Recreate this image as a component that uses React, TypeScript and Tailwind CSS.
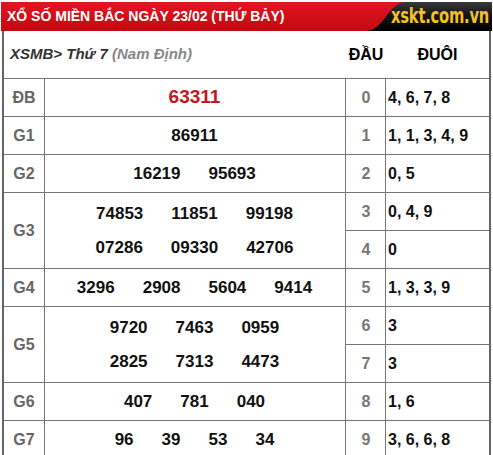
import React from "react";

const font = { fontFamily: '"Liberation Sans", Arial, sans-serif' };

type Row = { label: string; lines: string[][]; red?: boolean; tall?: boolean };

const rows: Row[] = [
  { label: "ĐB", lines: [["63311"]], red: true },
  { label: "G1", lines: [["86911"]] },
  { label: "G2", lines: [["16219", "95693"]] },
  { label: "G3", lines: [["74853", "11851", "99198"], ["07286", "09330", "42706"]], tall: true },
  { label: "G4", lines: [["3296", "2908", "5604", "9414"]] },
  { label: "G5", lines: [["9720", "7463", "0959"], ["2825", "7313", "4473"]], tall: true },
  { label: "G6", lines: [["407", "781", "040"]] },
  { label: "G7", lines: [["96", "39", "53", "34"]] },
];

const loto: [string, string][] = [
  ["0", "4, 6, 7, 8"],
  ["1", "1, 1, 3, 4, 9"],
  ["2", "0, 5"],
  ["3", "0, 4, 9"],
  ["4", "0"],
  ["5", "1, 3, 3, 9"],
  ["6", "3"],
  ["7", "3"],
  ["8", "1, 6"],
  ["9", "3, 6, 6, 8"],
];

function Logo() {
  return (
    <div className="relative h-full w-[126px] shrink-0">
      <svg className="absolute inset-0" width="126" height="29" viewBox="0 0 126 29">
        <defs>
          <linearGradient id="blk" x1="0" y1="0" x2="0" y2="1">
            <stop offset="0" stopColor="#3a3a3a" />
            <stop offset="0.45" stopColor="#151515" />
            <stop offset="1" stopColor="#000" />
          </linearGradient>
        </defs>
        <path d="M0 29 C 18 29 22 0 40 0 L126 0 L126 29 Z" fill="url(#blk)" />
      </svg>
      <div className="relative flex h-full items-center justify-end pr-[3px]">
        <span
          className="text-[21px] font-bold leading-none tracking-[-0.3px] text-[#f4c21c]"
          style={{
            fontFamily: '"DejaVu Sans", "Liberation Sans", sans-serif',
            transform: "scaleX(0.7)",
            transformOrigin: "right center",
            display: "inline-block",
          }}
        >
          xskt.com.vn
        </span>
      </div>
    </div>
  );
}

function Nums({ items, red }: { items: string[]; red?: boolean }) {
  return (
    <div className="flex justify-center gap-[28px]">
      {items.map((n, i) => (
        <span
          key={i}
          className={red ? "text-[19px] font-bold text-[#c8141c]" : "text-[17px] font-bold text-[#111]"}
        >
          {n}
        </span>
      ))}
    </div>
  );
}

export default function App() {
  return (
    <div className="h-[455px] w-[493px] overflow-hidden bg-white" style={font}>
      <div className="ml-[1px] mt-[2px] flex h-[29px] w-[491px] items-stretch justify-between bg-gradient-to-b from-[#e4141e] to-[#c00a12]">
        <div className="flex items-center pl-[6px] text-[14px] font-bold text-white">
          XỔ SỐ MIỀN BẮC NGÀY 23/02 (THỨ BẢY)
        </div>
        <Logo />
      </div>
      <div className="ml-[2px] w-[489px] border-x-2 border-[#666]">
        <div className="flex h-[48px] items-center border-b border-[#777]">
          <div className="w-[342px] pl-[6px] text-[15px] font-bold italic">
            <span className="text-[#333]">XSMB&gt; Thứ 7 </span>
            <span className="text-[#888]">(Nam Định)</span>
          </div>
          <div className="w-[40px] text-center text-[16px] font-bold text-black">ĐẦU</div>
          <div className="flex-1 text-center text-[16px] font-bold text-black">ĐUÔI</div>
        </div>
        <div className="flex">
          <div className="w-[342px] shrink-0 border-r border-[#777]">
            {rows.map((r) => (
              <div
                key={r.label}
                className={`flex border-b border-[#777] ${r.tall ? "h-[76px]" : "h-[38px]"}`}
              >
                <div className="flex w-[41px] shrink-0 items-center justify-center border-r border-[#777] text-[16px] font-bold text-[#666]">
                  {r.label}
                </div>
                <div className="flex flex-1 flex-col justify-center gap-[9px] pr-[1px]">
                  {r.lines.map((l, i) => (
                    <Nums key={i} items={l} red={r.red} />
                  ))}
                </div>
              </div>
            ))}
          </div>
          <div className="flex-1">
            {loto.map(([d, t]) => (
              <div key={d} className="flex h-[38px] border-b border-[#777]">
                <div className="flex w-[40px] shrink-0 items-center justify-center border-r border-[#777] pl-[1px] text-[16px] font-bold text-[#777]">
                  {d}
                </div>
                <div className="flex flex-1 items-center pl-[2px] text-[16px] font-bold text-[#111]">{t}</div>
              </div>
            ))}
          </div>
        </div>
      </div>
    </div>
  );
}
